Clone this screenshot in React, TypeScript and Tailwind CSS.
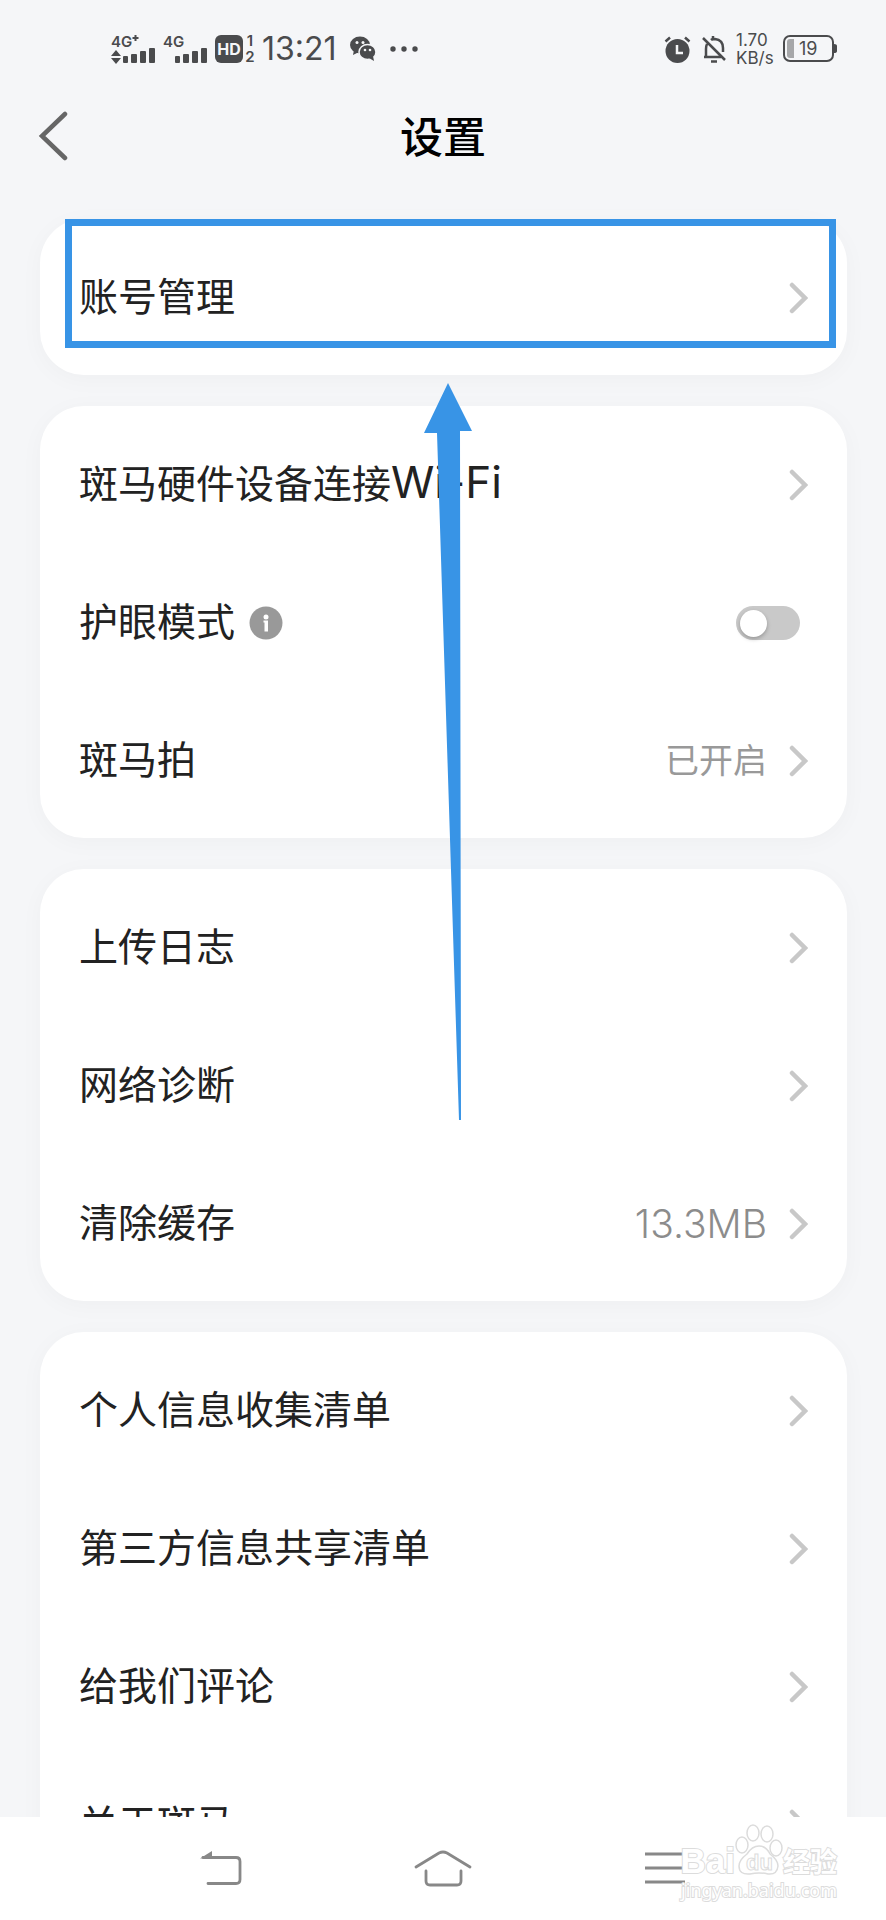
import { useState } from "react";

type Row = {
    label: string;
    latin?: string;
    value?: string;
    isSwitch?: boolean;
};

const groups: Array<Array<Row>> = [
    [{ label: "账号管理" }],
    [
        { label: "斑马硬件设备连接", latin: "Wi-Fi" },
        { label: "护眼模式", isSwitch: true },
        { label: "斑马拍", value: "已开启" },
    ],
    [{ label: "上传日志" }, { label: "网络诊断" }, { label: "清除缓存", value: "13.3MB" }],
    [{ label: "个人信息收集清单" }, { label: "第三方信息共享清单" }, { label: "给我们评论" }, { label: "关于斑马" }],
];

const labelCss = "pb-[9px] text-[39px] leading-[58px] text-[#222] font-['Noto_Sans_CJK_SC',sans-serif]";

function Signal({ label, plus }: { label: string; plus?: boolean }) {
    return (
        <svg width="45" height="32" viewBox="0 0 45 32" fill="#4a4b4d" aria-label="信号">
            <text x="0" y="14" fontSize="15" fontWeight="600" fontFamily="Inter, sans-serif">
                {label}
            </text>
            {plus && (
                <>
                    <path d="M21.500 5h6M24.500 2v6" stroke="#4a4b4d" strokeWidth="2" />
                    <path d="M5 17l5 6H0zM5 31l5-6H0z" />
                </>
            )}
            <rect x="12" y="23" width="5" height="7" rx="1" />
            <rect x="20" y="21" width="6" height="9" rx="1" />
            <rect x="29" y="18" width="6" height="12" rx="1" />
            <rect x="38" y="15" width="6" height="15" rx="1" />
        </svg>
    );
}

function StatusBar() {
    return (
        <div className="flex h-[98px] items-center justify-between pr-[49px] pl-[111px] font-[Inter,sans-serif] text-[#4a4b4d]">
            <div className="flex items-center">
                <Signal label="4G" plus />
                <div className="ml-[7px]">
                    <Signal label="4G" />
                </div>
                <div className="ml-[7px] flex h-7 w-7 items-center justify-center rounded-[6px] bg-[#4a4b4d] text-[16px] leading-7 font-bold text-[#f5f6f8]">
                    HD
                </div>
                <div className="ml-px flex w-3 flex-col items-center text-[15px] leading-4 font-semibold">
                    <span>1</span>
                    <span>2</span>
                </div>
                <span className="ml-[6px] text-[32px] leading-10">13:21</span>
                <svg className="ml-[13px]" width="27" height="26" viewBox="0 0 27 26" fill="#4a4b4d">
                    <ellipse cx="10" cy="9" rx="10" ry="8.500" />
                    <path d="M4 14l-1 5 6-3z" />
                    <circle cx="7" cy="6.500" r="1.500" fill="#f5f6f8" />
                    <circle cx="13" cy="6.500" r="1.500" fill="#f5f6f8" />
                    <ellipse cx="17.500" cy="16" rx="8.500" ry="7.500" stroke="#f5f6f8" strokeWidth="1.500" />
                    <path d="M19 22l5 3-1-5z" />
                    <circle cx="15" cy="14" r="1.300" fill="#f5f6f8" />
                    <circle cx="20" cy="14" r="1.300" fill="#f5f6f8" />
                </svg>
                <svg className="ml-[13px]" width="28" height="6" viewBox="0 0 28 6" fill="#4a4b4d">
                    <circle cx="3" cy="3" r="2.700" />
                    <circle cx="14" cy="3" r="2.700" />
                    <circle cx="25" cy="3" r="2.700" />
                </svg>
            </div>
            <div className="flex items-center">
                <svg width="27" height="27" viewBox="0 0 27 27">
                    <circle cx="13.500" cy="15" r="12" fill="#4a4b4d" />
                    <path d="M1.500 5.500L6 1.500M25.500 5.500L21 1.500" stroke="#4a4b4d" strokeWidth="2.500" />
                    <path d="M13 9v8h6" fill="none" stroke="#f5f6f8" strokeWidth="2.500" />
                </svg>
                <svg
                    className="ml-[11px]"
                    width="25"
                    height="27"
                    viewBox="0 0 25 27"
                    fill="none"
                    stroke="#4a4b4d"
                    strokeWidth="2.500"
                >
                    <path d="M1 2l22 22M5 8q-1 2-1 5v8H2h17M9 4q1-1 4-1 8 1 8 9v4" />
                    <path d="M9 25.500h6" />
                    <path d="M11 0v3" />
                </svg>
                <div className="ml-[9px] flex w-[39px] flex-col text-[17px] leading-[18px]">
                    <span>1.70</span>
                    <span>KB/s</span>
                </div>
                <svg className="ml-[8px]" width="54" height="28" viewBox="0 0 54 28">
                    <rect x="1" y="1" width="49" height="25" rx="6" fill="none" stroke="#4a4b4d" strokeWidth="2" />
                    <path d="M11 4v19H7q-3 0-3-3V7q0-3 3-3z" fill="#a6a7a9" />
                    <path d="M51 9q3 0 3 2v5q0 2-3 2z" fill="#4a4b4d" />
                    <text x="16" y="20" fontSize="18" fill="#4a4b4d" fontFamily="Inter, sans-serif">
                        19
                    </text>
                </svg>
            </div>
        </div>
    );
}

function Chevron() {
    return (
        <svg width="19" height="32" viewBox="0 0 19 32" fill="none" stroke="#c8c8c8" strokeWidth="4.500">
            <path d="M3 3l13 13L3 29" strokeLinecap="round" />
        </svg>
    );
}

function EyeCareRow({ label }: { label: string }) {
    const [isOn, setIsOn] = useState(false);

    return (
        <div className="flex h-[138px] items-center pr-[47px] pl-[39px]">
            <label htmlFor="eye-care" className={labelCss}>
                {label}
            </label>
            <button className="ml-[14px]" aria-label="说明">
                <svg width="34" height="34" viewBox="0 0 34 34">
                    <circle cx="17" cy="17" r="16.500" fill="#999" />
                    <circle cx="17" cy="11" r="2.500" fill="#fff" />
                    <path d="M14.500 14.500h4.500v11h-3.500v-9h-1z" fill="#fff" />
                </svg>
            </button>
            <label className="ml-auto flex h-[34px] w-[64px] items-center rounded-full bg-[#c9c9c9] px-1 has-checked:justify-end has-checked:bg-[#3894e6]">
                <input
                    id="eye-care"
                    type="checkbox"
                    role="switch"
                    className="sr-only"
                    checked={isOn}
                    onChange={() => setIsOn(!isOn)}
                />
                <span className="h-[27px] w-[27px] rounded-full bg-white shadow-[0_2px_4px_rgba(0,0,0,0.25)]" />
            </label>
        </div>
    );
}

function LinkRow({ row }: { row: Row }) {
    return (
        <button className="flex h-[138px] w-full items-center pr-[39px] pl-[39px] text-left">
            <span className={labelCss}>
                {row.label}
                {row.latin && <span className="font-[Inter,sans-serif] text-[44px] leading-none">{row.latin}</span>}
            </span>
            <span className="ml-auto flex items-center gap-[22px]">
                {row.value === "13.3MB" ? (
                    <span className="font-[Inter,sans-serif] text-[39px] leading-[58px] font-light text-[#8c8c8c]">
                        {row.value}
                    </span>
                ) : (
                    <span className="pb-[5px] font-['Noto_Sans_CJK_SC',sans-serif] text-[34px] leading-[58px] text-[#999]">
                        {row.value}
                    </span>
                )}
                <Chevron />
            </span>
        </button>
    );
}

function Watermark() {
    const outline = "text-white [paint-order:stroke_fill] [-webkit-text-stroke:2px_#dcdcdc]";

    return (
        <div className="absolute right-[49px] bottom-[18px] flex flex-col items-end">
            <div className="flex items-end">
                <span className={`${outline} font-['Liberation_Sans',sans-serif] text-[35px] leading-[34px] font-bold`}>
                    Bai
                </span>
                <svg width="48" height="54" viewBox="0 0 48 54" fill="#fff" stroke="#dcdcdc" strokeWidth="1.500">
                    <ellipse cx="7" cy="21" rx="6" ry="8" />
                    <ellipse cx="18" cy="9" rx="6" ry="8" />
                    <ellipse cx="32" cy="10" rx="6" ry="8" />
                    <ellipse cx="41" cy="24" rx="6" ry="8" />
                    <path d="M24 22q7 0 11 8 8 6 8 12-1 9-10 8-9-2-18 0-11 1-11-8 0-6 8-12 5-8 12-8z" />
                    <text
                        x="11"
                        y="46"
                        fontSize="22"
                        fontWeight="700"
                        fontFamily="Liberation Sans, sans-serif"
                        strokeWidth="1"
                    >
                        du
                    </text>
                </svg>
                <span className={`${outline} font-['Noto_Sans_CJK_SC',sans-serif] text-[27px] leading-[34px] font-bold`}>
                    经验
                </span>
            </div>
            <span className={`${outline} font-['Noto_Sans',sans-serif] text-[18px] leading-6`}>jingyan.baidu.com</span>
        </div>
    );
}

function NavBar() {
    return (
        <nav className="relative grid h-[103px] shrink-0 grid-cols-3 items-center justify-items-center bg-white px-[110px] pb-[2px]">
            <button aria-label="返回">
                <svg width="42" height="36" viewBox="0 0 42 36" fill="none" stroke="#888" strokeWidth="2.800">
                    <path d="M3 7.500h33q4 0 4 4v18q0 4-4 4H8" strokeLinecap="round" />
                    <path d="M0 8.500L12 1v7z" fill="#888" stroke="none" />
                </svg>
            </button>
            <button aria-label="主页">
                <svg
                    width="58"
                    height="38"
                    viewBox="0 0 58 38"
                    fill="none"
                    stroke="#888"
                    strokeWidth="2.800"
                    strokeLinecap="round"
                >
                    <path d="M2 18L25 4q4-2 8 0l23 14" />
                    <path d="M12 22v10q0 4 4 4h27q4 0 4-4V22" />
                </svg>
            </button>
            <button aria-label="菜单">
                <svg width="42" height="34" viewBox="0 0 42 34" stroke="#888" strokeWidth="3">
                    <path d="M1 3h40M1 17h40M1 31h40" />
                </svg>
            </button>
            <Watermark />
        </nav>
    );
}

function App() {
    return (
        <div className="relative flex h-screen flex-col overflow-hidden bg-[#f5f6f8]">
            <StatusBar />
            <header className="grid h-[76px] shrink-0 grid-cols-3 items-center px-[38px]">
                <button aria-label="返回">
                    <svg width="30" height="50" viewBox="0 0 30 50" fill="none" stroke="#666" strokeWidth="4.500">
                        <path d="M27 3L4 25l23 22" strokeLinecap="round" />
                    </svg>
                </button>
                <h1 className="pb-1 text-center font-['Noto_Sans_CJK_SC',sans-serif] text-[43px] leading-[64px] font-medium text-black">
                    设置
                </h1>
            </header>
            <main className="flex min-h-0 flex-1 flex-col gap-[31px] overflow-hidden pt-[45px] pr-[39px] pl-10">
                {groups.map((rows, index) => (
                    <section
                        key={rows[0].label}
                        className="relative shrink-0 rounded-[44px] bg-white pt-[10px] pb-2 shadow-[0_4px_24px_rgba(0,0,0,0.03)]"
                    >
                        {rows.map((row) =>
                            row.isSwitch ? (
                                <EyeCareRow key={row.label} label={row.label} />
                            ) : (
                                <LinkRow key={row.label} row={row} />
                            ),
                        )}
                        {index === 0 && (
                            <div className="pointer-events-none absolute top-0 right-[11px] left-[25px] h-[129px] border-[7px] border-[#3894e6]" />
                        )}
                    </section>
                ))}
            </main>
            <NavBar />
            <svg
                className="pointer-events-none absolute top-[383px] left-1/2 -ml-5"
                width="50"
                height="737"
                viewBox="0 0 50 737"
                fill="#3894e6"
            >
                <path d="M25 0L49 48H37L38 737H36L14 50H1z" />
            </svg>
        </div>
    );
}

export default App;
